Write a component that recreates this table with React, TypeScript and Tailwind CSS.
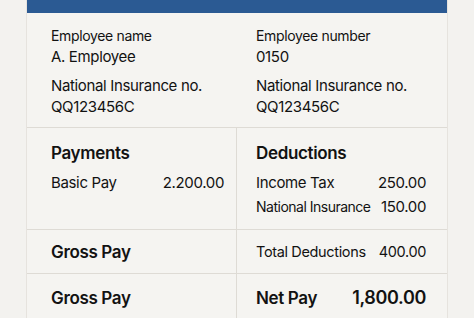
import React from "react";

const ink = "text-[#121212]";

function Field({ label, value, labelClass = "text-[14px] leading-[20px]" }: { label: string; value: string; labelClass?: string }) {
  return (
    <div>
      <div className={labelClass}>{label}</div>
      <div className="text-[15px] leading-[21px]">{value}</div>
    </div>
  );
}

function Line({ label, amount, labelClass = "" }: { label: string; amount: string; labelClass?: string }) {
  return (
    <div className="flex justify-between text-[15px] leading-[24px]">
      <span className={labelClass}>{label}</span>
      <span>{amount}</span>
    </div>
  );
}

export default function App() {
  return (
    <div className={`w-[474px] h-[318px] overflow-hidden bg-[#f3f2ef] px-[26px] font-['Inter',sans-serif] tracking-[-0.35px] ${ink}`}>
      <div className="flex h-full flex-col border-x border-[#e6e3de] bg-[#f5f4f1]">
        {/* header band */}
        <div className="h-[13px] shrink-0 bg-[#2b5a93]" />

        {/* employee details */}
        <div className="grid h-[115px] shrink-0 grid-cols-[210px_1fr] border-b border-[#dedbd5] pt-[13px]">
          <div className="pl-[24px]">
            <Field label="Employee name" value="A. Employee" />
            <div className="mt-[8px]">
              <Field label="National Insurance no." value="QQ123456C" labelClass="text-[15px] leading-[21px]" />
            </div>
          </div>
          <div className="pl-[19px]">
            <Field label="Employee number" value="0150" />
            <div className="mt-[8px]">
              <Field label="National Insurance no." value="QQ123456C" labelClass="text-[15px] leading-[21px]" />
            </div>
          </div>
        </div>

        {/* payments / deductions */}
        <div className="grid h-[102px] shrink-0 grid-cols-[210px_1fr] border-b border-[#dedbd5]">
          <div className="border-r border-[#dedbd5] pl-[24px] pr-[12px] pt-[13px]">
            <div className="text-[17px] font-semibold leading-[24px]">Payments</div>
            <div className="mt-[6px]">
              <Line label="Basic Pay" amount="2.200.00" />
            </div>
          </div>
          <div className="pl-[19px] pr-[21px] pt-[13px]">
            <div className="text-[17px] font-semibold leading-[24px]">Deductions</div>
            <div className="mt-[6px]">
              <Line label="Income Tax" amount="250.00" />
              <Line label="National Insurance" amount="150.00" labelClass="text-[14px] tracking-[-0.5px]" />
            </div>
          </div>
        </div>

        {/* totals */}
        <div className="grid h-[44px] shrink-0 grid-cols-[210px_1fr] border-b border-[#dedbd5]">
          <div className="flex items-center border-r border-[#dedbd5] pl-[24px]">
            <span className="text-[17px] font-semibold leading-[24px]">Gross Pay</span>
          </div>
          <div className="flex items-center justify-between pl-[19px] pr-[21px] text-[14.5px] leading-[24px]">
            <span>Total Deductions</span>
            <span>400.00</span>
          </div>
        </div>

        {/* net */}
        <div className="grid h-[48px] shrink-0 grid-cols-[210px_1fr]">
          <div className="flex items-center border-r border-[#dedbd5] pl-[24px]">
            <span className="text-[17px] font-semibold leading-[24px]">Gross Pay</span>
          </div>
          <div className="flex items-center justify-between pl-[19px] pr-[21px]">
            <span className="text-[17px] font-semibold leading-[24px]">Net Pay</span>
            <span className="text-[18px] font-semibold leading-[24px]">1,800.00</span>
          </div>
        </div>
      </div>
    </div>
  );
}
